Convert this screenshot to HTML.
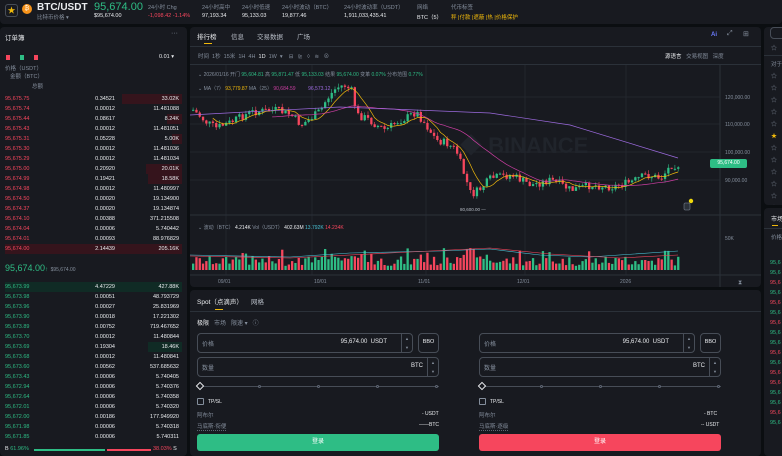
<!DOCTYPE html>
<html><head><meta charset="utf-8">
<style>
*{margin:0;padding:0;box-sizing:border-box}
body{width:782px;height:456px;background:#0b0e11;overflow:hidden;position:relative;font-family:"Liberation Sans","Noto Sans CJK SC",sans-serif;color:#eaecef;font-size:6px}
.p{position:absolute;background:#181a20;border-radius:4px;overflow:hidden}
.a{position:absolute;white-space:nowrap}
.g{color:#848e9c}.gr{color:#2ebd85}.rd{color:#f6465d}.y{color:#f0b90b}
.row{position:absolute;left:5px;width:177px;height:10px;font-size:5.5px;line-height:10px}
.row .bg{position:absolute;right:0;top:0;height:10px}
.row span{position:absolute}
.inp{position:absolute;border:1px solid #474d57;border-radius:4px;height:20px}
.btn{position:absolute;border-radius:3px;height:17px;text-align:center;line-height:17px;font-size:6px;color:#fff}
</style></head><body>
<div class="p" style="left:0;top:0;width:782px;height:24px;border-radius:0 0 4px 4px">
 <div class="a" style="left:5px;top:4px;width:13px;height:13px;border:1px solid #474d57;border-radius:3px;color:#f0b90b;font-size:8px;line-height:11px;text-align:center">★</div>
 <div class="a" style="left:22px;top:4px;width:10px;height:10px;border-radius:50%;background:#f7931a;color:#fff;font-size:6px;line-height:10px;text-align:center">₿</div>
 <div class="a" style="left:37px;top:2px;font-size:10px;font-weight:bold">BTC/USDT</div>
 <div class="a g" style="left:37px;top:13px;font-size:5.5px">比特币价格 ▾</div>
 <div class="a gr" style="left:94px;top:1px;font-size:11px">95,674.00</div>
 <div class="a" style="left:94px;top:13px;font-size:5.5px">$95,674.00</div>
 <div class="a g" style="left:148px;top:3px;font-size:5.5px">24小时 Chg</div>
 <div class="a rd" style="left:148px;top:13px;font-size:5.5px">-1,098.42 -1.14%</div>
 <div class="a g" style="left:202px;top:3px;font-size:5.5px">24小时高中</div><div class="a" style="left:202px;top:13px;font-size:5.5px">97,193.34</div>
 <div class="a g" style="left:242px;top:3px;font-size:5.5px">24小时低速</div><div class="a" style="left:242px;top:13px;font-size:5.5px">95,133.03</div>
 <div class="a g" style="left:282px;top:3px;font-size:5.5px">24小时波动（BTC）</div><div class="a" style="left:282px;top:13px;font-size:5.5px">19,877.46</div>
 <div class="a g" style="left:344px;top:3px;font-size:5.5px">24小时波动率（USDT）</div><div class="a" style="left:344px;top:13px;font-size:5.5px">1,911,033,435.41</div>
 <div class="a g" style="left:417px;top:3px;font-size:5.5px">网络</div><div class="a" style="left:417px;top:13px;font-size:5.5px">BTC（5）</div>
 <div class="a g" style="left:451px;top:3px;font-size:5.5px">代币标签</div><div class="a y" style="left:451px;top:13px;font-size:5.5px">秤 |付款 |遮蔽 |热 |价格保护</div>
</div>
<div class="p" style="left:0;top:27px;width:187px;height:429px">
 <div class="a" style="left:5px;top:5px;font-size:6.5px">订单簿</div>
 <div class="a g" style="left:171px;top:3px;font-size:7px">···</div>
 <div class="a" style="left:6px;top:28px;width:4px;height:5px;background:#f6465d"></div>
 <div class="a" style="left:20px;top:28px;width:4px;height:5px;background:#2ebd85"></div>
 <div class="a" style="left:34px;top:28px;width:4px;height:5px;background:#f6465d"></div>
 <div class="a" style="left:159px;top:27px;font-size:5.5px">0.01 ▾</div>
 <div class="a g" style="left:5px;top:37px;font-size:5.5px">价格（USDT）</div>
 <div class="a g" style="left:10px;top:45px;font-size:5.5px">金额（BTC）</div>
 <div class="a g" style="left:32px;top:55px;font-size:5.5px">总额</div>
 <div id="asks"></div>
 <div class="a gr" style="left:5px;top:236px;font-size:9px">95,674.00<span style="font-size:6px">↑</span> <span class="g" style="font-size:5px">$95,674.00</span></div>
 <div id="bids"></div>
 <div class="a" style="left:5px;top:419px;font-size:5.5px"><span>B</span> <span class="gr">61.96%</span></div>
 <div class="a" style="left:34px;top:422px;width:71px;height:2px;background:#2ebd85"></div>
 <div class="a" style="left:107px;top:422px;width:44px;height:2px;background:#f6465d"></div>
 <div class="a" style="left:153px;top:419px;font-size:5.5px"><span class="rd">38.03%</span> S</div>
</div>
<div class="p" style="left:190px;top:27px;width:571px;height:260px">
 <div class="a" style="left:7px;top:4px;font-size:6.5px">排行榜</div>
 <div class="a" style="left:14px;top:16px;width:8px;height:1px;background:#f0b90b"></div>
 <div class="a" style="left:41px;top:4px;font-size:6.5px;color:#b7bdc6">信息</div>
 <div class="a" style="left:67px;top:4px;font-size:6.5px;color:#b7bdc6">交易数据</div>
 <div class="a" style="left:107px;top:4px;font-size:6.5px;color:#b7bdc6">广场</div>
 <div class="a" style="left:521px;top:5px;font-size:6px;color:#6b7cff;font-weight:bold">Ai</div>
 <div class="a g" style="left:537px;top:3px;font-size:7px">⤢</div>
 <div class="a g" style="left:553px;top:3px;font-size:7px">⊞</div>
 <div class="a" style="left:0;top:19px;width:571px;height:1px;background:#2b3139"></div>
 <div class="a g" style="left:8px;top:25px;font-size:5.5px">时间 &nbsp;1秒 &nbsp;15米 &nbsp;1H &nbsp;4H &nbsp;<span style="color:#eaecef">1D</span> &nbsp;1W &nbsp;▾ &nbsp;&nbsp; ⊟ &nbsp; ⊵ &nbsp; ◊ &nbsp; ≋ &nbsp; ⊗</div>
 <div class="a" style="left:475px;top:25px;font-size:5.5px">源语言 &nbsp; <span class="g">交易视图 &nbsp; 深度</span></div>
 <div class="a" style="left:0;top:37px;width:571px;height:1px;background:#2b3139"></div>
 <svg class="a" style="left:0;top:38px" width="571" height="222" viewBox="0 0 571 222" id="ch"></svg>
 <div class="a g" style="left:8px;top:44px;font-size:5px">⌄ 2026/01/16 开门 <span class="gr">95,604.81</span> 高 <span class="gr">95,871.47</span> 低 <span class="gr">95,133.03</span> 结果 <span class="gr">95,674.00</span> 变革 <span class="gr">0.07%</span> 分布范围 <span class="gr">0.77%</span></div>
 <div class="a g" style="left:8px;top:58px;font-size:5px">⌄ MA（7） <span class="y">93,779.87</span> MA（25） <span style="color:#c93ea0">90,684.59</span> &nbsp; &nbsp; &nbsp; &nbsp; <span style="color:#9c6ade">96,573.12</span></div>
 <div class="a g" style="left:8px;top:197px;font-size:5px">⌄ 波动（BTC） <span style="color:#eaecef">4.214K</span> Vol（USDT） <span style="color:#eaecef">402.63M</span> <span style="color:#4ac3d6">13.792K</span> <span class="rd">14.234K</span></div>
 <div class="a" style="left:520px;top:132px;width:37px;height:9px;background:#2ebd85;color:#fff;border-radius:2px;font-size:5px;line-height:9px;text-align:center">95,674.00</div>
</div>
<div class="p" style="left:190px;top:290px;width:571px;height:166px">
 <div class="a" style="left:7px;top:6px;font-size:6.5px">Spot（点滴声）</div>
 <div class="a" style="left:25px;top:19px;width:8px;height:1px;background:#f0b90b"></div>
 <div class="a" style="left:61px;top:6px;font-size:6.5px;color:#b7bdc6">网格</div>
 <div class="a" style="left:0;top:21px;width:571px;height:1px;background:#2b3139"></div>
 <div class="a" style="left:7px;top:28px;font-size:6px">极限 <span class="g">&nbsp; 市场 &nbsp; 限速 ▾ &nbsp; ⓘ</span></div>
 <div id="forms"></div>
</div>
<div class="p" style="left:764px;top:27px;width:22px;height:178px">
 <div class="a" style="left:6px;top:0;width:20px;height:12px;border:1px solid #474d57;border-radius:4px"></div>
 <div class="a g" style="left:7px;top:16px;font-size:6px">☆</div>
 <div class="a" style="left:0;top:28px;width:22px;height:1px;background:#2b3139"></div>
 <div class="a g" style="left:7px;top:33px;font-size:5.5px">对于</div>
 <div id="stars"></div>
</div>
<div class="p" style="left:764px;top:208px;width:22px;height:248px">
 <div class="a" style="left:7px;top:6px;font-size:6px">市场</div>
 <div class="a" style="left:8px;top:17px;width:6px;height:1px;background:#f0b90b"></div>
 <div class="a" style="left:0;top:20px;width:22px;height:1px;background:#2b3139"></div>
 <div class="a g" style="left:7px;top:25px;font-size:5.5px">价格</div>
 <div id="mk"></div>
</div>
<script>
(function(){
function $(i){return document.getElementById(i)}
var asks=[["95,675.75","0.34521","33.02K",60],["95,675.74","0.00012","11.481088",0],["95,675.44","0.08617","8.24K",15],["95,675.43","0.00012","11.481051",0],["95,675.31","0.05228","5.00K",10],["95,675.30","0.00012","11.481036",0],["95,675.29","0.00012","11.481034",0],["95,675.00","0.20920","20.01K",36],["95,674.99","0.19421","18.58K",34],["95,674.98","0.00012","11.480997",0],["95,674.50","0.00020","19.134900",0],["95,674.37","0.00020","19.134874",0],["95,674.10","0.00388","371.215508",0],["95,674.04","0.00006","5.740442",0],["95,674.01","0.00093","88.976829",0],["95,674.00","2.14439","205.16K",177]];
var h="";asks.forEach(function(r,i){h+='<div class="row" style="top:'+(67+i*10)+'px"><div class="bg" style="width:'+r[3]+'px;background:#35141c"></div><span class="rd" style="left:0">'+r[0]+'</span><span style="right:67px">'+r[1]+'</span><span style="right:3px">'+r[2]+'</span></div>'});$("asks").innerHTML=h;
var bids=[["95,673.99","4.47229","427.88K",177],["95,673.98","0.00051","48.793729",0],["95,673.96","0.00027","25.831969",0],["95,673.90","0.00018","17.221302",0],["95,673.89","0.00752","719.467652",0],["95,673.70","0.00012","11.480844",0],["95,673.69","0.19304","18.46K",34],["95,673.68","0.00012","11.480841",0],["95,673.60","0.00562","537.685632",0],["95,673.43","0.00006","5.740405",0],["95,672.94","0.00006","5.740376",0],["95,672.64","0.00006","5.740358",0],["95,672.01","0.00006","5.740320",0],["95,672.00","0.00186","177.949920",0],["95,671.98","0.00006","5.740318",0],["95,671.85","0.00006","5.740311",0]];
h="";bids.forEach(function(r,i){h+='<div class="row" style="top:'+(255+i*10)+'px"><div class="bg" style="width:'+r[3]+'px;background:#102b25"></div><span class="gr" style="left:0">'+r[0]+'</span><span style="right:67px">'+r[1]+'</span><span style="right:3px">'+r[2]+'</span></div>'});$("bids").innerHTML=h;
h="";[[7,"USDT","BTC","- USDT","——BTC","#2ebd85","马底斯·衔便"],[289,"BTC","USDT","- BTC","-- USDT","#f6465d","马底斯·逐级"]].forEach(function(f){var x=f[0];
h+='<div class="inp" style="left:'+x+'px;top:43px;width:216px"><span class="a g" style="left:4px;top:5px;font-size:6px">价格</span><span class="a" style="right:25px;top:5px;font-size:6px">95,674.00 &nbsp;USDT</span><span class="a" style="right:0;top:0;width:11px;height:18px;border-left:1px solid #474d57;color:#848e9c;font-size:4px;text-align:center;line-height:9px">▲<br>▼</span></div>';
h+='<div class="inp" style="left:'+(x+221)+'px;top:43px;width:21px;font-size:5.5px;text-align:center;line-height:17px">BBO</div>';
h+='<div class="inp" style="left:'+x+'px;top:67px;width:242px"><span class="a g" style="left:4px;top:5px;font-size:6px">数量</span><span class="a" style="right:15px;top:5px;font-size:6px">BTC</span><span class="a" style="right:0;top:0;width:11px;height:18px;border-left:1px solid #474d57;color:#848e9c;font-size:4px;text-align:center;line-height:9px">▲<br>▼</span></div>';
h+='<div class="a" style="left:'+(x+2)+'px;top:96px;width:240px;height:1px;background:#474d57"></div>';
h+='<div class="a" style="left:'+x+'px;top:93px;width:6px;height:6px;border:1px solid #eaecef;transform:rotate(45deg);background:#181a20"></div>';
for(var k=1;k<5;k++)h+='<div class="a" style="left:'+(x+2+k*59)+'px;top:94.5px;width:3px;height:3px;border-radius:50%;border:1px solid #5e6673;background:#181a20"></div>';
h+='<div class="a" style="left:'+x+'px;top:108px;width:7px;height:7px;border:1px solid #848e9c;border-radius:1px"></div><div class="a" style="left:'+(x+11)+'px;top:109px;font-size:5px">TP/SL</div>';
h+='<div class="a g" style="left:'+x+'px;top:121px;font-size:5.5px">阿布尔</div><div class="a" style="left:'+(x+225)+'px;top:121px;font-size:5px">'+f[3]+'</div>';
h+='<div class="a g" style="left:'+x+'px;top:132px;font-size:5.5px;border-bottom:1px dotted #5e6673">'+f[6]+'</div><div class="a" style="left:'+(x+222)+'px;top:132px;font-size:5px">'+f[4]+'</div>';
h+='<div class="btn" style="left:'+x+'px;top:144px;width:242px;background:'+f[5]+'">登录</div>';});
$("forms").innerHTML=h;
h="";for(var i=0;i<12;i++)h+='<div class="a" style="left:7px;top:'+(44+i*12)+'px;font-size:6px;color:'+(i==5?'#f0b90b':'#848e9c')+'">'+(i==5?'★':'☆')+'</div>';$("stars").innerHTML=h;
h="";for(var i=0;i<17;i++)h+='<div class="a" style="left:6px;top:'+(52+i*10)+'px;font-size:5.5px;color:'+([0,1,3,5,7,8,10,13,14,16].indexOf(i)>=0?'#2ebd85':'#f6465d')+'">95,6</div>';$("mk").innerHTML=h;

var s='';
function f1(v){v=Number(v);if(!isFinite(v))v=0;return v.toFixed(1)}
[36,122,236,335,436].forEach(function(v){s+='<line x1="'+v+'" y1="0" x2="'+v+'" y2="210" stroke="#22262d"/>'});
[32,59,87,115].forEach(function(v){s+='<line x1="0" y1="'+v+'" x2="530" y2="'+v+'" stroke="#22262d"/>'});
s+='<line x1="530" y1="0" x2="530" y2="222" stroke="#2b3139"/>';
s+='<line x1="0" y1="150" x2="571" y2="150" stroke="#2b3139"/><line x1="0" y1="210" x2="571" y2="210" stroke="#2b3139"/>';
[["120,000.00",32],["110,000.00",59],["100,000.00",87],["90,000.00",115]].forEach(function(v){s+='<text x="535" y="'+(v[1]+2)+'" fill="#848e9c" font-size="5">'+v[0]+'</text>'});
s+='<text x="535" y="175" fill="#848e9c" font-size="5">50K</text>';
[["09/01",28],["10/01",124],["11/01",228],["12/01",327],["2026",430]].forEach(function(v){s+='<text x="'+v[1]+'" y="218" fill="#848e9c" font-size="5">'+v[0]+'</text>'});
s+='<text x="270" y="88" fill="#20242b" font-size="22" font-weight="bold">◆ BINANCE</text>';
var kp=[[0,43],[15,57],[25,63],[40,57],[60,47],[85,45],[100,50],[110,60],[120,53],[130,45],[135,35],[145,23],[153,20],[162,27],[165,50],[175,53],[185,60],[195,65],[205,57],[215,53],[225,47],[235,60],[245,75],[255,78],[265,85],[275,115],[280,130],[288,125],[300,113],[320,110],[340,120],[360,115],[380,125],[400,120],[420,122],[440,117],[455,110],[470,113],[480,100],[495,100]];
function py(x){for(var i=0;i<kp.length-1;i++){if(x<=kp[i+1][0]){var t=(x-kp[i][0])/(kp[i+1][0]-kp[i][0]);return kp[i][1]+t*(kp[i+1][1]-kp[i][1])}}return 100}
var seed=7;function rnd(){seed=(seed*9301+49297)%233280;return seed/233280}
var closes=[];var prev=py(2);
for(var n=0;n<148;n++){var x=2+n*3.3;var c=py(x)+(rnd()-0.5)*8;var o=prev;var up=c<o;var col=up?'#2ebd85':'#f6465d';
var bt=Math.min(o,c),bb=Math.max(o,c);if(bb-bt<1)bb=bt+1;
var wt=bt-rnd()*4,wb=bb+rnd()*4;
s+='<rect x="'+f1(x+0.8)+'" y="'+f1(wt)+'" width="0.6" height="'+f1(wb-wt)+'" fill="'+col+'"/>';
s+='<rect x="'+f1(x)+'" y="'+f1(bt)+'" width="2.3" height="'+f1(bb-bt)+'" fill="'+col+'"/>';
var vh=4+rnd()*10+(bb-bt>5?8:0);
s+='<rect x="'+f1(x)+'" y="'+f1(205-vh)+'" width="2.3" height="'+f1(vh)+'" fill="'+col+'"/>';
closes.push([x,c]);prev=c;}
function ma(m,col){var p='';for(var i=m-1;i<closes.length;i++){var sm=0;for(var j=i-m+1;j<=i;j++)sm+=closes[j][1];p+=(p?' L':'M')+f1(closes[i][0]+1)+' '+f1(sm/m)}s+='<path d="'+p+'" fill="none" stroke="'+col+'" stroke-width="0.7"/>'}
ma(7,'#f0b90b');ma(25,'#c93ea0');
s+='<path d="M0 50 L150 42 L300 48 L380 60 L488 93" fill="none" stroke="#9c6ade" stroke-width="0.7"/>';
s+='<path d="M0 190 L100 192 L160 188 L250 186 L300 184 L350 190 L400 192 L488 186" fill="none" stroke="#4ac3d6" stroke-width="0.6"/>';
s+='<path d="M0 191 L100 193 L200 188 L300 183 L360 189 L430 193 L488 190" fill="none" stroke="#f6465d" stroke-width="0.6"/>';
s+='<text x="270" y="146" fill="#b7bdc6" font-size="4.5">80,600.00 —</text>';
s+='<rect x="494" y="138" width="6" height="7" rx="1" fill="#2b3139" stroke="#848e9c" stroke-width="0.5"/><circle cx="501" cy="136" r="2.2" fill="#f0d90b"/>';
s+='<text x="548" y="219" fill="#848e9c" font-size="6">⧗</text>';
$("ch").innerHTML=s;
})();
</script>
</body></html>
